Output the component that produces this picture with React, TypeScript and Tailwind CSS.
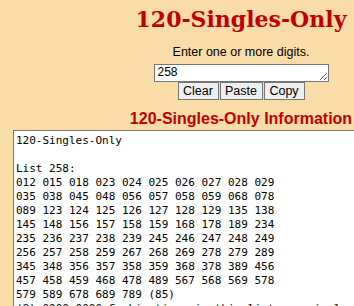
const numbers = [
  '012 015 018 023 024 025 026 027 028 029',
  '035 038 045 048 056 057 058 059 068 078',
  '089 123 124 125 126 127 128 129 135 138',
  '145 148 156 157 158 159 168 178 189 234',
  '235 236 237 238 239 245 246 247 248 249',
  '256 257 258 259 267 268 269 278 279 289',
  '345 348 356 357 358 359 368 378 389 456',
  '457 458 459 468 478 489 567 568 569 578',
  '579 589 678 689 789 (85)',
];

const info = [
  '120-Singles-Only',
  '',
  'List 258:',
  ...numbers,
  '(8) 0000-0000 Combinations in this list are singles only.',
].join('\n');

export default function App() {
  return (
    <div className="w-[354px] h-[306px] overflow-hidden bg-[#f9dca7]">
      <div className="w-[482px] font-['Liberation_Sans',Arial,sans-serif] text-black">
        <h1 className="pt-[6px] text-center font-['DejaVu_Serif',Georgia,serif] text-[22px] leading-[26px] font-bold text-[#c00000]">
          120-Singles-Only
        </h1>
        <p className="mt-[13px] text-center text-[12.5px] leading-[15px]">Enter one or more digits.</p>
        <div className="mt-[4px] flex justify-center">
          <textarea
            rows={1}
            defaultValue="258"
            className="h-[18px] w-[175px] border border-[#767676] bg-white px-[3px] text-[12px] leading-[14px] font-['Liberation_Sans',Arial,sans-serif]"
          />
        </div>
        <div className="flex justify-center gap-[1px]">
          <button className="h-[18px] w-[41px] border border-[#767676] bg-[#efefef] text-[12.5px] leading-[14px]">Clear</button>
          <button className="h-[18px] w-[43px] border border-[#767676] bg-[#efefef] text-[12.5px] leading-[14px]">Paste</button>
          <button className="h-[18px] w-[41px] border border-[#767676] bg-[#efefef] text-[12.5px] leading-[14px]">Copy</button>
        </div>
        <h2 className="mt-[10px] text-center text-[16px] leading-[18px] font-bold text-[#c00000]">
          120-Singles-Only Information
        </h2>
        <textarea
          readOnly
          value={info}
          className="mt-[2px] ml-[13px] block h-[220px] w-[456px] border border-[#767676] bg-white px-[2px] pt-[3px] font-['DejaVu_Sans_Mono',Consolas,monospace] text-[11px] leading-[14px] whitespace-pre"
        />
      </div>
    </div>
  );
}
